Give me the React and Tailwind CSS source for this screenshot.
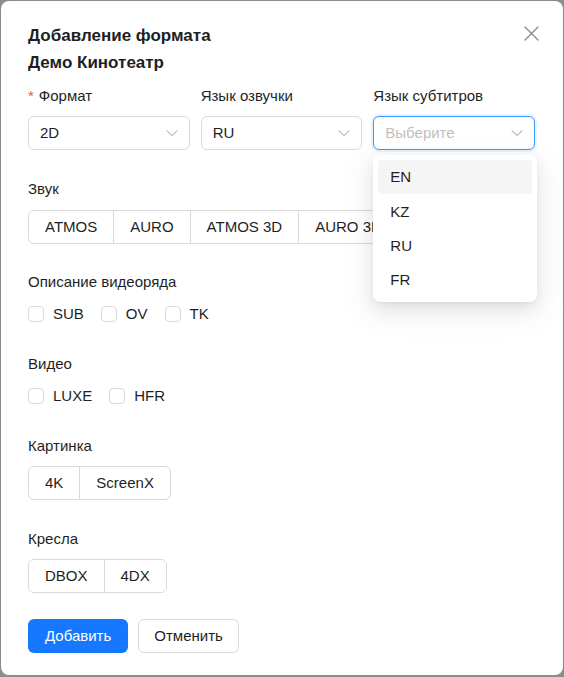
import { useState } from "react";

const font = { fontFamily: '"Liberation Sans", Arial, sans-serif' };

const Chevron = () => (
  <svg width="12" height="12" viewBox="0 0 12 12" fill="none" className="shrink-0">
    <path d="M1 3.8 L6 8.6 L11 3.8" stroke="#bfbfbf" strokeWidth="1.2" strokeLinecap="round" strokeLinejoin="round" />
  </svg>
);

const Select = ({ value, placeholder, focused, children }) => (
  <div className="relative">
    <div
      className={`flex h-[34px] items-center justify-between rounded-md border bg-white pl-[11px] pr-[11px] ${
        focused ? "border-[#4096ff] shadow-[0_0_0_2px_rgba(5,145,255,0.1)]" : "border-[#d9d9d9]"
      }`}
    >
      <span className={value ? "text-[#1f1f1f]" : "text-[#bfbfbf]"}>{value || placeholder}</span>
      <Chevron />
    </div>
    {children}
  </div>
);

const Segmented = ({ items }) => (
  <div className="flex">
    {items.map((t, i) => (
      <div
        key={t}
        className={`flex h-[34px] items-center whitespace-nowrap border border-[#d9d9d9] bg-white px-[16px] text-[#1f1f1f] ${
          i === 0 ? "rounded-l-md" : "-ml-px"
        } ${i === items.length - 1 ? "rounded-r-md" : ""}`}
      >
        {t}
      </div>
    ))}
  </div>
);

const Checks = ({ items }) => (
  <div className="flex h-[22px] items-center">
    {items.map((t) => (
      <label key={t} className="mr-2 flex items-center">
        <span className="h-4 w-4 rounded-[4px] border border-[#d9d9d9] bg-white" />
        <span className="px-[9px] text-[#1f1f1f]">{t}</span>
      </label>
    ))}
  </div>
);

const Label = ({ children, required, className = "" }) => (
  <div className={`flex h-[22px] items-center text-[#1f1f1f] ${className}`}>
    {required && <span className="mr-[5px] text-[#ff4d4f]">*</span>}
    {children}
  </div>
);

export default function App() {
  const [lang] = useState(["EN", "KZ", "RU", "FR"]);

  return (
    <div className="min-h-screen bg-[#8c8c8c] p-px" style={font}>
      <div className="relative flex flex-col rounded-lg bg-white px-[27px] pb-[22px] pt-[21px] text-[15px]">
        <button type="button" className="absolute right-[22px] top-[23px] p-0.5">
          <svg width="15" height="15" viewBox="0 0 15 15">
            <path d="M1 1 L14 14 M14 1 L1 14" stroke="#8c8c8c" strokeWidth="1.4" strokeLinecap="round" />
          </svg>
        </button>

        <div className="text-[17px] font-bold leading-[27px] text-[#1f1f1f]">
          <div>Добавление формата</div>
          <div>Демо Кинотеатр</div>
        </div>

        <div className="mt-[9px] grid grid-cols-3 gap-x-[11px] pr-px">
          <Label required>Формат</Label>
          <Label>Язык озвучки</Label>
          <Label>Язык субтитров</Label>
          <div className="mt-[9px]">
            <Select value="2D" />
          </div>
          <div className="mt-[9px]">
            <Select value="RU" />
          </div>
          <div className="mt-[9px]">
            <Select placeholder="Выберите" focused>
              <div className="absolute left-0 top-[39px] z-10 w-[164px] rounded-lg bg-white p-[5px] shadow-[0_6px_16px_0_rgba(0,0,0,0.08),0_3px_6px_-4px_rgba(0,0,0,0.12),0_9px_28px_8px_rgba(0,0,0,0.05)]">
                {lang.map((l, i) => (
                  <div
                    key={l}
                    className={`flex h-[34px] items-center rounded px-[12px] text-[#1f1f1f] ${i === 0 ? "bg-[#f5f5f5]" : ""} ${i === 1 ? "mt-px" : ""}`}
                  >
                    {l}
                  </div>
                ))}
              </div>
            </Select>
          </div>
        </div>

        <Label className="mt-[28px]">Звук</Label>
        <div className="mt-[10px]">
          <Segmented items={["ATMOS", "AURO", "ATMOS 3D", "AURO 3D"]} />
        </div>

        <Label className="mt-[27px]">Описание видеоряда</Label>
        <div className="mt-[10px]">
          <Checks items={["SUB", "OV", "TK"]} />
        </div>

        <Label className="mt-[28px]">Видео</Label>
        <div className="mt-[10px]">
          <Checks items={["LUXE", "HFR"]} />
        </div>

        <Label className="mt-[28px]">Картинка</Label>
        <div className="mt-[9px]">
          <Segmented items={["4K", "ScreenX"]} />
        </div>

        <Label className="mt-[28px]">Кресла</Label>
        <div className="mt-[9px]">
          <Segmented items={["DBOX", "4DX"]} />
        </div>

        <div className="mt-[26px] flex gap-[10px]">
          <button type="button" className="h-[34px] rounded-md bg-[#1677ff] px-[17px] text-white">
            Добавить
          </button>
          <button type="button" className="h-[34px] rounded-md border border-[#d9d9d9] bg-white px-[15px] text-[#1f1f1f]">
            Отменить
          </button>
        </div>
      </div>
    </div>
  );
}
